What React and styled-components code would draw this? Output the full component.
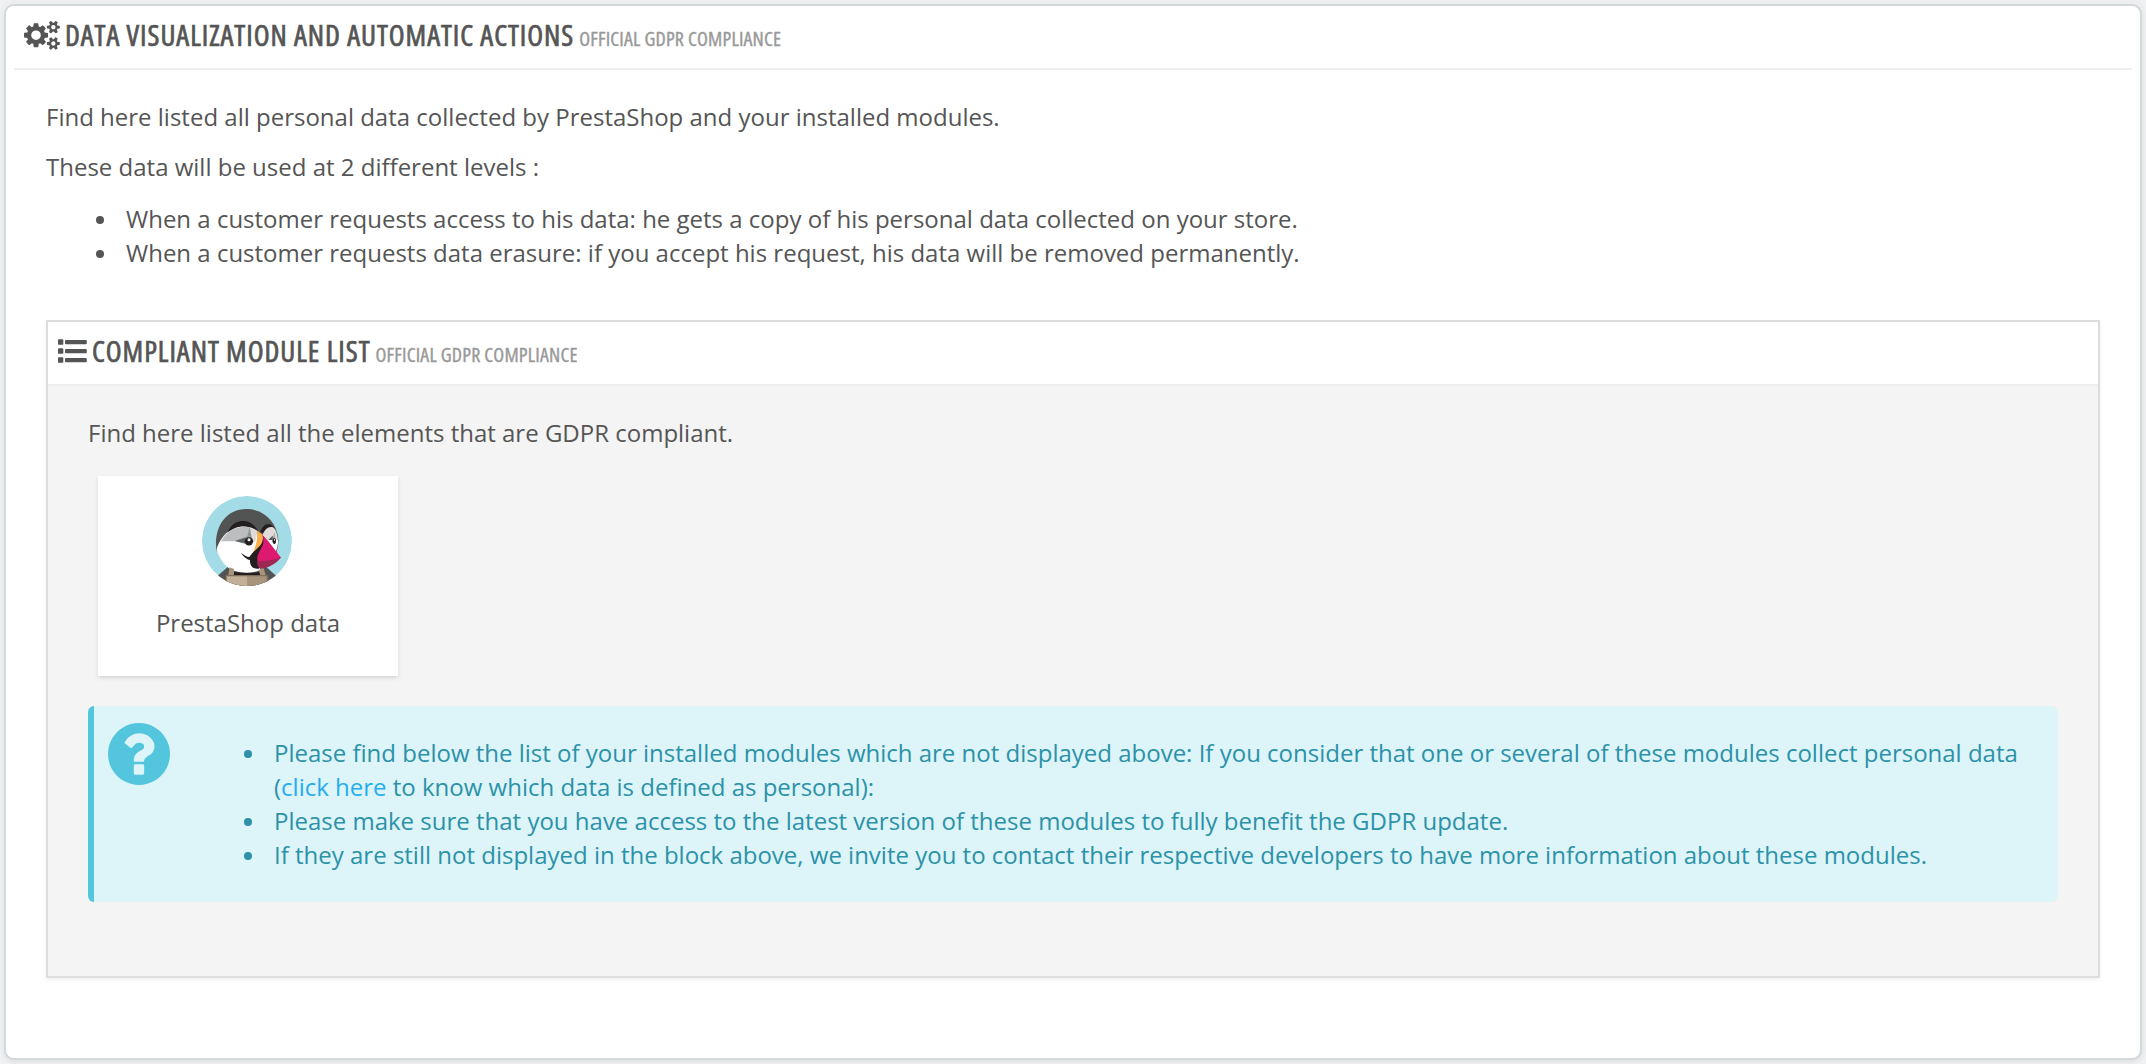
import React from "react";
import styled, { createGlobalStyle } from "styled-components";

const Global = createGlobalStyle`
  * { box-sizing: border-box; }
  body {
    margin: 0;
    background: #eff1f2;
    color: #555;
    font-family: "Open Sans", sans-serif;
    font-size: 24px;
    line-height: 34px;
  }
  p, ul, h3 { margin: 0; padding: 0; }
`;

const Page = styled.div`
  display: flex;
  height: 1064px;
  padding: 4px;
`;

const Panel = styled.section`
  flex: 1;
  display: flex;
  flex-direction: column;
  background: #fff;
  border: 2px solid #d3d8db;
  border-radius: 10px;
  box-shadow: 0 2px 4px rgba(0, 0, 0, 0.05), 0 0 0 4px rgba(0, 0, 0, 0.01);
`;

const Heading = styled.h3`
  display: flex;
  align-items: flex-start;
  height: 64px;
  margin: 0 ${(p) => (p.$inset ? 8 : 0)}px;
  padding: 9px 10px 0;
  background: #fff;
  border-bottom: 2px solid #eee;
  font-size: 29px;
  font-weight: 400;
  font-stretch: 75%;
  line-height: 40px;
  text-transform: uppercase;
  white-space: nowrap;
`;

const HeadingIcon = styled.svg`
  flex: none;
  width: ${(p) => p.$w}px;
  height: ${(p) => p.$h}px;
  margin: ${(p) => p.$top}px 5px 0 0;
  fill: #555;
`;

const Title = styled.span`
  letter-spacing: 0.96px;
  -webkit-text-stroke: 0.7px currentColor;
`;

const Subtitle = styled.small`
  margin-left: 5px;
  color: #999;
  font-size: 20px;
  letter-spacing: 0.18px;
  -webkit-text-stroke: 0.35px currentColor;
`;

const Content = styled.div`
  display: flex;
  flex-direction: column;
  padding: 30px 40px 0;
`;

const Paragraph = styled.p`
  margin-bottom: 16px;
`;

const BulletList = styled.ul`
  display: flex;
  flex-direction: column;
  list-style: none;
  margin: 2px 0 50px;
  padding-left: 50px;
`;

const Bullet = styled.li`
  display: flex;
  align-items: flex-start;

  &::before {
    content: "";
    flex: none;
    width: 8px;
    height: 8px;
    margin: 14px 22px 0 0;
    border-radius: 50%;
    background: currentColor;
  }
`;

const ModulePanel = styled.section`
  display: flex;
  flex-direction: column;
  height: 658px;
  background: #f4f4f4;
  border: 2px solid #ddd;
  box-shadow: 0 2px 4px rgba(0, 0, 0, 0.06);
`;

const ModuleBody = styled.div`
  display: flex;
  flex-direction: column;
  align-items: stretch;
  padding: 30px 40px 0;
`;

const Card = styled.article`
  display: flex;
  flex-direction: column;
  align-items: center;
  gap: 20px;
  width: 300px;
  height: 200px;
  margin: 26px 0 30px 10px;
  padding-top: 20px;
  background: #fff;
  box-shadow: 0 2px 4px rgba(0, 0, 0, 0.12);
`;

const Avatar = styled.svg`
  width: 90px;
  height: 90px;
  margin-right: 2px;
`;

const Alert = styled.aside`
  display: flex;
  align-items: flex-start;
  height: 196px;
  border-left: 6px solid #53c6de;
  border-radius: 6px;
  background: #ddf4f8;
  color: #2b92a9;
`;

const AlertIcon = styled.svg`
  flex: none;
  width: 62px;
  height: 62px;
  margin: 17px 74px 0 14px;
  fill: #53c6de;
`;

const AlertList = styled(BulletList)`
  flex: 1;
  margin: 30px 30px 0 0;
  padding: 0;
`;

const Link = styled.a`
  color: #25adf0;
  text-decoration: none;
`;

const SMALL_COG =
  "M1664 1408q0-52-38-90t-90-38-90 38-38 90q0 53 37.5 90.5t90.5 37.5 90.5-37.5 37.5-90.5zm256-70v140q0 16-149 31-12 27-30 52 51 113 51 138 0 4-4 7-122 71-124 71-8 0-46-47t-52-68q-20 2-30 2t-30-2q-14 21-52 68t-46 47q-2 0-124-71-4-3-4-7 0-25 51-138-18-25-30-52-149-15-149-31v-140q0-16 149-31 13-29 30-52-51-113-51-138 0-4 4-7 4-2 35-20t59-34 30-16q8 0 46 46.5t52 67.5q20-2 30-2t30 2q51-71 92-112l6-2q4 0 124 70 4 3 4 7 0 25-51 138 17 23 30 52 149 15 149 31z";

function CogsIcon() {
  return (
    <HeadingIcon $w={36} $h={34} $top={3} viewBox="0 0 1920 1792">
      <path transform="translate(0 10)" d="M896 896q0-106-75-181t-181-75-181 75-75 181 75 181 181 75 181-75 75-181zm384-91v185q0 10-7 19.5t-16 10.5l-155 24q-11 35-32 76 34 48 90 115 7 11 7 20 0 12-7 19-23 30-82.5 89.5t-78.5 59.5q-11 0-21-7l-115-90q-37 19-77 31-11 108-23 155-7 24-30 24h-186q-11 0-20-7.5t-10-17.5l-23-153q-34-10-75-31l-118 89q-7 7-20 7-11 0-21-8-144-133-144-160 0-9 7-19 10-14 41-53t47-61q-23-44-35-82l-152-24q-10-1-17-9.5t-7-19.5v-185q0-10 7-19.5t16-10.5l155-24q11-35 32-76-34-48-90-115-7-11-7-20 0-12 7-20 22-30 82-89t79-59q11 0 21 7l115 90q34-18 77-32 11-108 23-154 7-24 30-24h186q11 0 20 7.5t10 17.5l23 153q34 10 75 31l118-89q8-7 20-7 11 0 21 8 144 133 144 160 0 8-7 19-12 16-42 54t-45 60q23 48 34 82l152 23q10 2 17 10.5t7 19.5z" />
      <path transform="translate(1566 476) scale(0.9) translate(-1536 -1408)" d={SMALL_COG} />
      <path transform="translate(1566 1350) scale(0.9) translate(-1536 -1408)" d={SMALL_COG} />
    </HeadingIcon>
  );
}

function ListIcon() {
  return (
    <HeadingIcon $w={29} $h={24} $top={8} viewBox="0 0 29 24">
      {[0, 9, 18].map((y) => (
        <React.Fragment key={y}>
          <rect x="0" y={y + 0.3} width="5.3" height="5.5" rx="0.9" />
          <rect x="7" y={y + 1} width="21.8" height="4.2" rx="0.9" />
        </React.Fragment>
      ))}
    </HeadingIcon>
  );
}

function Puffin() {
  return (
    <Avatar viewBox="18 18 270 270">
      <defs>
        <clipPath id="disc">
          <circle cx="153" cy="153" r="135" />
        </clipPath>
      </defs>
      <g clipPath="url(#disc)">
        <circle cx="153" cy="153" r="135" fill="#a3dbe6" />
        <path d="M60 262L96 230H210L245 262V290H60z" fill="#515453" />
        <path d="M62 184C50 116 88 57 150 57c56 0 92 40 97 90 1 18-3 34-8 46L190 215z" fill="#515453" />
        <path d="M88 256H218V290H88z" fill="#6b5b4d" />
        <path d="M62 180C78 222 98 248 152 248c28 0 43-8 48-14l-8-58-9-52C160 104 118 100 88 132c-14 15-24 33-26 48z" fill="#fff" />
        <path d="M75 154C90 124 118 110 146 110c16 0 28 4 38 12l-8 32z" fill="#bcbdbf" />
        <path d="M162 111l22 11-6 34-12-6z" fill="#e0dbd9" />
        <path d="M94 128C108 98 126 93 141 93c20 0 36 12 46 31-12-9-28-15-42-15-20 0-36 8-51 19z" fill="#231f20" />
        <path d="M117 153l37-14 7-27 8 40-9 13z" fill="#909596" />
        <path d="M117 153l32-10 3 18z" fill="#5b6061" />
        <circle cx="159" cy="154" r="12.5" fill="#231f20" />
        <circle cx="159" cy="149" r="4.5" fill="#fff" />
        <path d="M192 127c10-28 35-38 47-2 3 10 4 20 3 28l-10-15z" fill="#231f20" />
        <path d="M199 136c8-20 19-28 32-24 9 6 14 22 15 42l-5 2-12-18-14 14z" fill="#e0dbd9" />
        <path d="M214 150h32c1 14-3 26-7 35z" fill="#fff" />
        <path d="M227 157l8-32 5 30z" fill="#a6abad" />
        <ellipse cx="235" cy="153" rx="5" ry="9" fill="#231f20" />
        <ellipse cx="236" cy="149" rx="1.6" ry="3" fill="#fff" />
        <path d="M183 122c7 3 13 8 17 13 2 18-1 28-10 39-9 9-15 18-23 27 8-24 20-48 16-79z" fill="#fbb04c" />
        <path d="M201 137c7 13 5 27 2 45l-14 54c-16 2-28-6-27-26-10-2-22-12-27-22 9 8 17 12 25 13 9-14 23-25 32-34 8-9 10-18 9-30z" fill="#231f20" />
        <path d="M199 134c18 20 39 45 56 69-14 9-38 14-70 11-6-20 14-38 17-55 1-9 0-17-3-25z" fill="#de1a70" />
        <path d="M184 212c30 3 52-2 71-10-13 18-34 31-62 35-8-7-11-16-9-25z" fill="#9e2754" />
        <path d="M114 246q38 6 76 0l3 9h-82z" fill="#231f20" />
        <path d="M101 232l13 5v22H96z" fill="#a8947b" />
        <path d="M188 240l15-5 7 24h-16z" fill="#a8947b" />
        <path d="M90 255h126v36H90z" fill="#806d5b" />
        <path d="M92 259h61v31H92z" fill="#c2af98" />
        <path d="M153 259h59v31h-59z" fill="#a8947b" />
      </g>
    </Avatar>
  );
}

function QuestionIcon() {
  return (
    <AlertIcon viewBox="128 128 1536 1536">
      <path d="M1024 1376v-192q0-14-9-23t-23-9h-192q-14 0-23 9t-9 23v192q0 14 9 23t23 9h192q14 0 23-9t9-23zm256-672q0-88-55.5-163t-138.5-116-170-41q-243 0-371 213-15 24 8 42l132 100q7 6 19 6 16 0 25-12 53-68 86-92 34-24 86-24 48 0 85.5 26t37.5 59q0 38-20 61t-68 45q-63 28-115.5 86.5t-52.5 125.5v36q0 14 9 23t23 9h192q14 0 23-9t9-23q0-19 21.5-49.5t54.5-49.5q32-18 49-28.5t46-35 44.5-48 28-60.5 12.5-81zm384 192q0 209-103 385.5t-279.5 279.5-385.5 103-385.5-103-279.5-279.5-103-385.5 103-385.5 279.5-279.5 385.5-103 385.5 103 279.5 279.5 103 385.5z" />
    </AlertIcon>
  );
}

export default function App() {
  return (
    <>
      <Global />
      <Page>
        <Panel>
          <Heading $inset>
            <CogsIcon />
            <span>
              <Title>Data visualization and automatic actions</Title>
              <Subtitle>Official GDPR compliance</Subtitle>
            </span>
          </Heading>
          <Content>
            <Paragraph>Find here listed all personal data collected by PrestaShop and your installed modules.</Paragraph>
            <Paragraph>These data will be used at 2 different levels :</Paragraph>
            <BulletList>
              <Bullet>When a customer requests access to his data: he gets a copy of his personal data collected on your store.</Bullet>
              <Bullet>When a customer requests data erasure: if you accept his request, his data will be removed permanently.</Bullet>
            </BulletList>
            <ModulePanel>
              <Heading>
                <ListIcon />
                <span>
                  <Title>Compliant module list</Title>
                  <Subtitle>Official GDPR compliance</Subtitle>
                </span>
              </Heading>
              <ModuleBody>
                <p>Find here listed all the elements that are GDPR compliant.</p>
                <Card>
                  <Puffin />
                  <span>PrestaShop data</span>
                </Card>
                <Alert>
                  <QuestionIcon />
                  <AlertList>
                    <Bullet>
                      <span>
                        Please find below the list of your installed modules which are not displayed above: If you consider
                        that one or several of these modules collect personal data (<Link>click here</Link> to know which
                        data is defined as personal):
                      </span>
                    </Bullet>
                    <Bullet>Please make sure that you have access to the latest version of these modules to fully benefit the GDPR update.</Bullet>
                    <Bullet>
                      If they are still not displayed in the block above, we invite you to contact their respective
                      developers to have more information about these modules.
                    </Bullet>
                  </AlertList>
                </Alert>
              </ModuleBody>
            </ModulePanel>
          </Content>
        </Panel>
      </Page>
    </>
  );
}
